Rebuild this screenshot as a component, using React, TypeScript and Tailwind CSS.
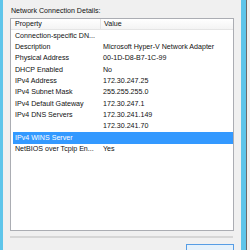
const rows: [string, string][] = [
  ["Connection-specific DN...", ""],
  ["Description", "Microsoft Hyper-V Network Adapter"],
  ["Physical Address", "00-1D-D8-B7-1C-99"],
  ["DHCP Enabled", "No"],
  ["IPv4 Address", "172.30.247.25"],
  ["IPv4 Subnet Mask", "255.255.255.0"],
  ["IPv4 Default Gateway", "172.30.247.1"],
  ["IPv4 DNS Servers", "172.30.241.149"],
  ["", "172.30.241.70"],
  ["IPv4 WINS Server", ""],
  ["NetBIOS over Tcpip En...", "Yes"],
];

const SELECTED = 9;

export default function App() {
  return (
    <div
      className="flex h-[250px] w-[250px] overflow-hidden bg-[#f0f0f0] text-[7.1px] text-[#111]"
      style={{ fontFamily: '"Liberation Sans", Arial, sans-serif' }}
    >
      <div className="w-[3px] shrink-0 bg-[#5ec5ea]" />

      <div className="flex w-[238px] shrink-0 flex-col px-[7px]">
        <div className="h-[18px] shrink-0 pt-[7px] pl-[1px] leading-[9px]">Network Connection Details:</div>

        <div className="flex h-[213px] shrink-0 flex-col border border-[#abadb3] bg-white">
          <div className="flex h-[11.33px] shrink-0 items-center border-b border-[#e5e5e5] bg-gradient-to-b from-white to-[#f4f4f4] leading-none">
            <div className="w-[90px] border-r border-[#e5e5e5] pl-[4px] leading-[11px]">Property</div>
            <div className="pl-[3px]">Value</div>
          </div>

          {rows.map(([prop, value], i) => (
            <div
              key={i}
              className={
                i === SELECTED
                  ? "ml-[2px] flex h-[11.33px] shrink-0 items-center bg-[#3399ff] text-white"
                  : "ml-[2px] flex h-[11.33px] shrink-0 items-center"
              }
            >
              <div className="w-[88px] shrink-0 truncate pl-[2px]">{prop}</div>
              <div className="pl-[2px] whitespace-nowrap">{value}</div>
            </div>
          ))}
        </div>

        <div className="mt-[5px] h-[2px] w-[223px] shrink-0 bg-[#d6d6d6]" />

        <div className="mt-[6px] flex shrink-0 justify-end">
          <button className="h-[22px] w-[48px] border border-[#569de5] bg-[#e5f1fb] text-[7.1px] text-black">
            Close
          </button>
        </div>
      </div>

      <div className="w-[5px] shrink-0 bg-[#5ec5ea]" />
      <div className="w-[1px] shrink-0 bg-[#6b6b6b]" />
      <div className="flex-1 bg-[#f0f0f0]" />
    </div>
  );
}
